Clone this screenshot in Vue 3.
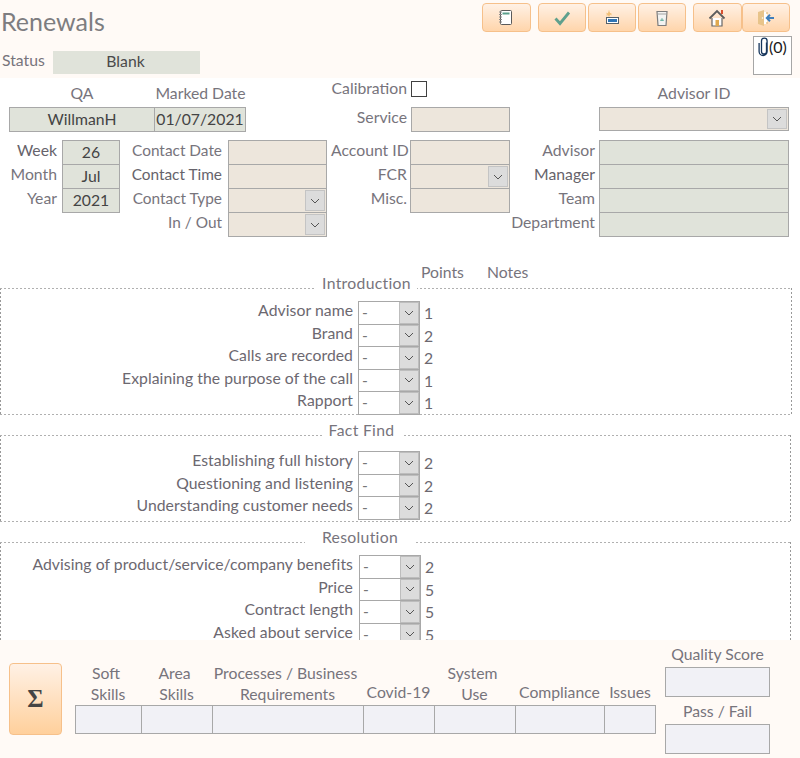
<script setup>
const topColumns = [
  {
    key: 'period', labelWidth: 57, fieldWidth: 58, gap: 5, tone: 'grey',
    rows: [
      { label: 'Week', value: '26', strong: true },
      { label: 'Month', value: 'Jul' },
      { label: 'Year', value: '2021' },
    ],
  },
  {
    key: 'contact', labelWidth: 96, fieldWidth: 99, gap: 6, tone: 'tan',
    rows: [
      { label: 'Contact Date' },
      { label: 'Contact Time', strong: true },
      { label: 'Contact Type', combo: true },
      { label: 'In / Out', combo: true },
    ],
  },
  {
    key: 'account', labelWidth: 76, fieldWidth: 100, gap: 3, tone: 'tan',
    rows: [
      { label: 'Account ID' },
      { label: 'FCR', combo: true },
      { label: 'Misc.' },
    ],
  },
  {
    key: 'advisor', labelWidth: 84, fieldWidth: 190, gap: 4, tone: 'grey',
    rows: [
      { label: 'Advisor' },
      { label: 'Manager', strong: true },
      { label: 'Team' },
      { label: 'Department' },
    ],
  },
]

const sections = [
  {
    title: 'Introduction', gap: 101, center: 366.5, cls: 'intro',
    items: [
      ['Advisor name', 1],
      ['Brand', 2],
      ['Calls are recorded', 2],
      ['Explaining the purpose of the call', 1],
      ['Rapport', 1],
    ],
  },
  {
    title: 'Fact Find', gap: 80, center: 361.5, cls: 'fact',
    items: [
      ['Establishing full history', 2],
      ['Questioning and listening', 2],
      ['Understanding customer needs', 2],
    ],
  },
  {
    title: 'Resolution', gap: 110, center: 360, cls: 'resolution',
    items: [
      ['Advising of product/service/company benefits', 2],
      ['Price', 5],
      ['Contract length', 5],
      ['Asked about service', 5],
    ],
  },
]

const metrics = [
  { width: 66, lines: ['Soft', 'Skills'] },
  { width: 71, lines: ['Area', 'Skills'] },
  { width: 151, lines: ['Processes / Business', 'Requirements'] },
  { width: 71, lines: ['Covid-19'] },
  { width: 81, lines: ['System', 'Use'] },
  { width: 89, lines: ['Compliance'] },
  { width: 52, lines: ['Issues'] },
]
</script>

<template>
  <div class="app">
    <header class="head">
      <div class="head-left">
        <h1 class="title">Renewals</h1>
        <div class="status">
          <span class="status-label">Status</span>
          <span class="status-value">Blank</span>
        </div>
      </div>
      <div class="head-right">
        <div class="toolbar">
          <button class="btn">
            <svg width="20" height="20" viewBox="0 0 20 20">
              <rect x="4.500" y="2.500" width="11" height="14" rx="1" fill="#fff" stroke="#5a5a5a" />
              <rect x="6.500" y="4.500" width="7" height="2" fill="#5aa08c" />
              <path d="M3 4h3M3 6.500h3M3 9h3M3 11.500h3M3 14h3" stroke="#8a8a8a" stroke-width="1" />
            </svg>
          </button>
          <button class="btn group-start">
            <svg width="20" height="20" viewBox="0 0 20 20">
              <path d="M3.500 10.500l4.500 5 9-11" fill="none" stroke="#5fa08d" stroke-width="2.800" />
            </svg>
          </button>
          <button class="btn near">
            <svg width="20" height="20" viewBox="0 0 20 20">
              <path d="M7 3l.9 2.100L10 6l-2.100.9L7 9l-.9-2.100L4 6l2.100-.9z" fill="#f0b55f" />
              <path d="M4 5l6 2M4 8l2-1M7 2v6" stroke="#f3cb8e" stroke-width=".6" />
              <rect x="4.500" y="9.500" width="12" height="6" fill="#fff" stroke="#55606a" />
              <rect x="6" y="11" width="9" height="3" fill="#2f74b5" />
            </svg>
          </button>
          <button class="btn near">
            <svg width="20" height="20" viewBox="0 0 20 20">
              <path d="M5 3.500h10l-1 14H6z" fill="#f3f3f1" stroke="#7d7d7d" stroke-width="1.200" />
              <path d="M5.500 6h9" stroke="#a3a3a3" />
              <path d="M8.500 12.500l1.500-2 1.500 2z" fill="none" stroke="#6fb5a5" stroke-width="1" />
            </svg>
          </button>
          <button class="btn group-start">
            <svg width="20" height="20" viewBox="0 0 20 20">
              <path d="M5 10v8h10v-8" fill="#fff" stroke="#666" stroke-width="1.200" />
              <rect x="8.500" y="12" width="3.500" height="6" fill="#e0a94f" />
              <path d="M2.500 10.500L10 3l7.500 7.500" fill="none" stroke="#5d5d5d" stroke-width="1.800" />
              <rect x="14" y="2" width="2" height="4" fill="#d9502f" />
            </svg>
          </button>
          <button class="btn">
            <svg width="20" height="20" viewBox="0 0 20 20">
              <path d="M2 4l6-2v16l-6-2z" fill="#e8c48a" />
              <path d="M8 4h3v12H8z" fill="#fff" />
              <path d="M11 4v2M11 14v2" stroke="#e8c48a" stroke-width="1.500" />
              <circle cx="6.500" cy="10" r=".8" fill="#fff" />
              <path d="M18 10h-7M14 6.800L10.800 10l3.200 3.200" fill="none" stroke="#3f7fbc" stroke-width="2" />
            </svg>
          </button>
        </div>
        <div class="attach">
          <svg class="clip" width="13" height="20" viewBox="0 0 13 20">
            <path
              d="M9.500 5.500v9a2.500 2.500 0 0 1-5 0V4a2.800 2.800 0 0 1 5.600 0v10.500a4 4 0 0 1-8 0V6"
              fill="none"
              stroke="#16365c"
              stroke-width="1.300"
            />
          </svg>
          <span>(0)</span>
        </div>
      </div>
    </header>

    <main class="form">
      <div class="form-top">
        <div class="qa">
          <span class="cap">QA</span>
          <span class="cap">Marked Date</span>
          <span class="box grey centered">WillmanH</span>
          <span class="box grey centered joined">01/07/2021</span>
        </div>
        <div class="service">
          <span class="lab">Calibration</span>
          <span class="check-cell"><span class="check" /></span>
          <span class="lab">Service</span>
          <span class="box tan" />
        </div>
        <div class="advisor-id">
          <span class="cap">Advisor ID</span>
          <span class="box tan">
            <span class="drop">
              <svg width="10" height="6" viewBox="0 0 10 6"><path d="M1 1l4 4 4-4" fill="none" stroke="#555" /></svg>
            </span>
          </span>
        </div>
      </div>

      <div class="form-mid">
        <div
          v-for="col in topColumns"
          :key="col.key"
          class="mid-col"
          :class="col.key"
          :style="{ gridTemplateColumns: `${col.labelWidth}px ${col.fieldWidth}px`, columnGap: `${col.gap}px` }"
        >
          <template v-for="row in col.rows" :key="row.label">
            <span class="lab" :class="{ strong: row.strong }">{{ row.label }}</span>
            <span class="box stacked" :class="[col.tone, { centered: row.value }]">
              {{ row.value }}
              <span v-if="row.combo" class="drop">
                <svg width="10" height="6" viewBox="0 0 10 6"><path d="M1 1l4 4 4-4" fill="none" stroke="#555" /></svg>
              </span>
            </span>
          </template>
        </div>
      </div>

      <div class="col-heads">
        <span class="points-head">Points</span>
        <span>Notes</span>
      </div>

      <section v-for="sec in sections" :key="sec.title" class="group" :class="sec.cls">
        <span
          class="legend"
          :style="{ left: `${sec.center - sec.gap / 2}px`, width: `${sec.gap}px` }"
        >{{ sec.title }}</span>
        <div v-for="item in sec.items" :key="item[0]" class="q-row">
          <span class="q-label">{{ item[0] }}</span>
          <span class="select">
            <span class="select-text">-</span>
            <span class="select-btn">
              <svg width="10" height="6" viewBox="0 0 10 6"><path d="M1 1l4 4 4-4" fill="none" stroke="#555" /></svg>
            </span>
          </span>
          <span class="q-points">{{ item[1] }}</span>
        </div>
      </section>
    </main>

    <footer class="foot">
      <button class="sigma">Σ</button>
      <div class="metrics">
        <div v-for="m in metrics" :key="m.lines[0]" class="metric" :style="{ width: `${m.width}px` }">
          <div class="metric-head" :class="{ single: m.lines.length === 1 }">
            <span v-for="line in m.lines" :key="line">{{ line }}</span>
          </div>
          <div class="metric-box" />
        </div>
      </div>
      <div class="score">
        <span class="score-cap">Quality Score</span>
        <div class="score-box" />
        <span class="score-cap pass">Pass / Fail</span>
        <div class="score-box" />
      </div>
    </footer>
  </div>
</template>

<style>
body {
  margin: 0;
  background: #fff;
}
</style>

<style scoped>
.app {
  display: flex;
  flex-direction: column;
  width: 800px;
  height: 758px;
  overflow: hidden;
  font-family: Lato, "Open Sans", sans-serif;
  font-size: 15.750px;
  color: #77747c;
  background: #fff;
}

.head {
  flex: 0 0 78px;
  display: flex;
  justify-content: space-between;
  background: #fffaf6;
}

.title {
  margin: 5px 0 0 1px;
  font-size: 25px;
  font-weight: 400;
  line-height: 32px;
  color: #7d7d80;
}

.status {
  display: flex;
  align-items: center;
  margin-top: 14px;
}

.status-label {
  width: 53px;
  padding-left: 2px;
  box-sizing: border-box;
  margin-top: -6px;
}

.status-value {
  width: 147px;
  height: 23px;
  padding-right: 2px;
  box-sizing: border-box;
  line-height: 20px;
  text-align: center;
  color: #4a4a4a;
  background: #e0e3da;
}

.head-right {
  display: flex;
  flex-direction: column;
  align-items: flex-end;
  padding: 3px 8px 0 0;
}

.toolbar {
  display: flex;
  margin-right: 2px;
}

.btn {
  display: flex;
  align-items: center;
  justify-content: center;
  width: 48.500px;
  height: 29px;
  padding: 0;
  border: 1px solid #f6c08a;
  border-radius: 4px;
  background: linear-gradient(#fff1e5, #ffd5ab);
}

.group-start {
  margin-left: 7px;
}

.near {
  margin-left: 1.500px;
}

.attach {
  display: flex;
  align-items: flex-start;
  box-sizing: border-box;
  width: 39px;
  height: 39px;
  margin-top: 4px;
  padding: 0 0 0 3px;
  border: 1px solid #a6a6a6;
  background: #fff;
  font-size: 16px;
  line-height: 20px;
  color: #1a1a1a;
}

.clip {
  flex: none;
  margin-right: -1px;
}

.form {
  flex: 1;
  min-height: 0;
  overflow: hidden;
}

.form-top {
  display: flex;
  height: 54px;
}

.qa {
  display: grid;
  grid-template-columns: 146px 91px;
  grid-template-rows: 29px 25px;
  margin-left: 9px;
}

.cap {
  align-self: end;
  margin-bottom: 3px;
  text-align: center;
  line-height: 23px;
}

.box {
  position: relative;
  display: block;
  box-sizing: border-box;
  border: 1px solid #a8a8a8;
  color: #444;
  line-height: 22px;
}

.grey {
  background: #e0e3da;
}

.tan {
  background: #ede6dc;
}

.centered {
  text-align: center;
}

.joined {
  margin-left: -1px;
}

.service {
  display: grid;
  grid-template-columns: 161px 99px;
  grid-template-rows: 29px 25px;
  column-gap: 4px;
}

.lab {
  text-align: right;
  line-height: 20px;
  white-space: nowrap;
}

.contact .lab {
  font-size: 15.400px;
}

.strong {
  color: #66636b;
}

.check-cell {
  display: flex;
  align-items: flex-start;
  padding-top: 3px;
}

.check {
  box-sizing: border-box;
  width: 16px;
  height: 16px;
  border: 1px solid #404040;
  background: #fff;
}

.advisor-id {
  display: grid;
  grid-template-rows: 29px 24px;
  width: 190px;
  margin-left: 89px;
}

.drop {
  position: absolute;
  top: 1px;
  right: 1px;
  bottom: 1px;
  display: flex;
  align-items: center;
  justify-content: center;
  box-sizing: border-box;
  width: 20px;
  background: #dcdcdc;
  border: 1px solid #c4c4c4;
}

.form-mid {
  display: flex;
  margin-top: 8px;
  height: 96px;
}

.mid-col {
  display: grid;
  grid-auto-rows: 24px;
  align-content: start;
}

.contact {
  margin-left: 6px;
}

.account {
  margin-left: 4px;
}

.advisor {
  margin-left: 1px;
}

.stacked {
  height: 25px;
  margin-bottom: -1px;
}

.col-heads {
  display: flex;
  height: 20px;
  margin-top: 26px;
  padding-left: 421px;
  line-height: 20px;
}

.points-head {
  width: 66px;
}

.group {
  position: relative;
  box-sizing: border-box;
  width: 791px;
  background:
    linear-gradient(90deg, #b0b0b0 50%, transparent 0) 0 0 / 4px 1px repeat-x,
    linear-gradient(90deg, #b0b0b0 50%, transparent 0) 0 100% / 4px 1px repeat-x,
    linear-gradient(#999 50%, transparent 0) 0 0 / 1px 4px repeat-y,
    linear-gradient(#999 50%, transparent 0) 100% 0 / 1px 4px repeat-y;
}

.intro {
  width: 792px;
  height: 126.500px;
  margin-top: 6px;
  padding-top: 13px;
}

.fact {
  height: 87px;
  margin-top: 20.500px;
  padding-top: 16px;
}

.resolution {
  height: 120px;
  margin-top: 20px;
  padding-top: 13px;
}

.legend {
  position: absolute;
  top: -15px;
  height: 20px;
  line-height: 20px;
  letter-spacing: .3px;
  text-align: center;
  background: #fff;
}

.q-row {
  display: flex;
  height: 22.500px;
}

.q-label {
  width: 353px;
  margin-right: 5px;
  text-align: right;
  line-height: 18px;
  letter-spacing: .05px;
  white-space: nowrap;
  color: #6c6870;
}

.resolution .q-label {
  margin-right: 6px;
}

.select {
  position: relative;
  flex: none;
  box-sizing: border-box;
  width: 62px;
  height: 23.500px;
  border: 1px solid #a8a8a8;
  background: #fff;
}

.select-text {
  padding-left: 3px;
  line-height: 20px;
  color: #777;
}

.select-btn {
  position: absolute;
  top: 0;
  right: 0;
  bottom: 0;
  display: flex;
  align-items: center;
  justify-content: center;
  box-sizing: border-box;
  width: 20px;
  background: #dcdcdc;
  border: 1px solid #bdbdbd;
}

.q-points {
  margin-left: 4px;
  line-height: 23px;
  color: #6c6870;
}

.foot {
  flex: 0 0 118px;
  display: flex;
  align-items: flex-start;
  padding-left: 9px;
  background: #fffaf6;
}

.sigma {
  width: 53px;
  height: 72px;
  margin-top: 23px;
  padding: 0;
  border: 1px solid #f6c08a;
  border-radius: 4px;
  background: linear-gradient(#fff1e5, #ffd09c);
  font-family: "Liberation Serif", serif;
  font-size: 25px;
  font-weight: 700;
  color: #444;
}

.metrics {
  display: flex;
  margin: 23px 0 0 13px;
}

.metric-head {
  display: flex;
  flex-direction: column;
  justify-content: flex-end;
  align-items: center;
  box-sizing: border-box;
  height: 42px;
  padding-bottom: 1px;
  line-height: 21px;
  white-space: nowrap;
}

.metric-head span:first-child:not(:last-child) {
  margin-right: 4px;
}

.metric-head.single {
  padding-bottom: 3px;
}

.metric-box {
  box-sizing: border-box;
  height: 29px;
  margin-right: -1px;
  border: 1px solid #a8a8a8;
  background: #f1f1f6;
}

.metric:last-child .metric-box {
  margin-right: 0;
}

.score {
  display: flex;
  flex-direction: column;
  width: 105px;
  margin: 3px 0 0 9px;
}

.score-cap {
  margin-bottom: 2px;
  text-align: center;
  line-height: 22px;
}

.pass {
  margin-top: 3px;
}

.score-box {
  box-sizing: border-box;
  height: 30px;
  border: 1px solid #a8a8a8;
  background: #f1f1f6;
}
</style>
